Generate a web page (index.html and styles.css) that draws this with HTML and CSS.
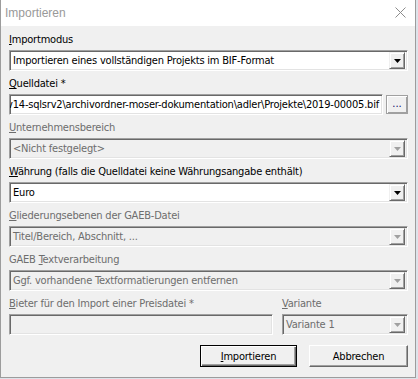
FILE: index.html
```html
<!DOCTYPE html>
<html lang="de">
<head>
    <meta charset="UTF-8">
    <title>Importieren</title>
    <link rel="stylesheet" href="styles.css">
</head>
<body>
    <div class="window">
        <div class="titlebar">
            <span class="title">Importieren</span>
            <svg class="close" width="11" height="11" viewBox="0 0 11 11">
                <path d="M0.5 0.5L10.5 10.5M10.5 0.5L0.5 10.5" stroke="#8c8c8c" stroke-width="1" fill="none"/>
            </svg>
        </div>
        <div class="content">
            <div class="field">
                <label class="label"><u>I</u>mportmodus</label>
                <div class="combo">
                    <span class="value">Importieren eines vollständigen Projekts im BIF-Format</span>
                    <span class="drop"><svg width="7" height="4" viewBox="0 0 7 4"><path d="M0 0H7L3.5 4Z"/></svg></span>
                </div>
            </div>
            <div class="field">
                <label class="label"><u>Q</u>uelldatei *</label>
                <div class="file-row">
                    <div class="edit path"><span>\\srv14-sqlsrv2\archivordner-moser-dokumentation\adler\Projekte\2019-00005.bif</span></div>
                    <button class="browse">...</button>
                </div>
            </div>
            <div class="field disabled">
                <label class="label"><u>U</u>nternehmensbereich</label>
                <div class="combo">
                    <span class="value">&lt;Nicht festgelegt&gt;</span>
                    <span class="drop"><svg width="7" height="4" viewBox="0 0 7 4"><path d="M0 0H7L3.5 4Z"/></svg></span>
                </div>
            </div>
            <div class="field">
                <label class="label"><u>W</u>ährung (falls die Quelldatei keine Währungsangabe enthält)</label>
                <div class="combo">
                    <span class="value">Euro</span>
                    <span class="drop"><svg width="7" height="4" viewBox="0 0 7 4"><path d="M0 0H7L3.5 4Z"/></svg></span>
                </div>
            </div>
            <div class="field disabled">
                <label class="label"><u>G</u>liederungsebenen der GAEB-Datei</label>
                <div class="combo">
                    <span class="value">Titel/Bereich, Abschnitt, ...</span>
                    <span class="drop"><svg width="7" height="4" viewBox="0 0 7 4"><path d="M0 0H7L3.5 4Z"/></svg></span>
                </div>
            </div>
            <div class="field disabled">
                <label class="label">GAEB <u>T</u>extverarbeitung</label>
                <div class="combo">
                    <span class="value">Ggf. vorhandene Textformatierungen entfernen</span>
                    <span class="drop"><svg width="7" height="4" viewBox="0 0 7 4"><path d="M0 0H7L3.5 4Z"/></svg></span>
                </div>
            </div>
            <div class="field-row">
                <div class="field disabled bidder">
                    <label class="label"><u>B</u>ieter für den Import einer Preisdatei *</label>
                    <div class="edit"></div>
                </div>
                <div class="field disabled variant">
                    <label class="label"><u>V</u>ariante</label>
                    <div class="combo">
                        <span class="value">Variante 1</span>
                        <span class="drop"><svg width="7" height="4" viewBox="0 0 7 4"><path d="M0 0H7L3.5 4Z"/></svg></span>
                    </div>
                </div>
            </div>
            <div class="buttons">
                <button class="btn default"><u>I</u>mportieren</button>
                <button class="btn cancel">Abbrechen</button>
            </div>
        </div>
    </div>
</body>
</html>
```

FILE: styles.css
```css
* {
    box-sizing: border-box;
}
body {
    margin: 0;
    background-color: #dde3ea;
    font-family: "DejaVu Sans Condensed", "DejaVu Sans", sans-serif;
    font-stretch: condensed;
    font-size: 11px;
    letter-spacing: -0.2px;
    color: #000;
}
.window {
    width: 416px;
    height: 378px;
    background-color: #f0f0f0;
    border: 1px solid #9c9c9c;
    border-top: 0;
    display: flex;
    flex-direction: column;
}
.titlebar {
    height: 26px;
    background-color: #fff;
    display: flex;
    align-items: center;
    justify-content: space-between;
    padding: 0 9px 1px 4px;
}
.title {
    font-family: "Liberation Sans", sans-serif;
    font-stretch: normal;
    font-size: 12px;
    letter-spacing: 0;
    color: #999;
}
.content {
    padding: 7px 7px 0 8px;
    display: flex;
    flex-direction: column;
}
.field {
    display: flex;
    flex-direction: column;
    margin-bottom: 6px;
}
.label {
    line-height: 13px;
    height: 13px;
    margin-bottom: 4px;
    white-space: nowrap;
}
.disabled .label {
    color: #6d6d6d;
}
.combo, .edit {
    height: 21px;
    border: 1px solid;
    border-color: #a0a0a0 #fff #fff #a0a0a0;
    box-shadow: inset 1px 1px 0 #696969, inset -1px -1px 0 #e3e3e3;
    background-color: #fff;
    display: flex;
    align-items: center;
    padding: 2px;
    overflow: hidden;
}
.value {
    flex: 1;
    padding-left: 1px;
    white-space: nowrap;
    overflow: hidden;
}
.drop {
    width: 16px;
    height: 17px;
    background-color: #f0f0f0;
    border: 1px solid;
    border-color: #f0f0f0 #696969 #696969 #f0f0f0;
    box-shadow: inset 1px 1px 0 #fff, inset -1px -1px 0 #a0a0a0;
    display: flex;
    align-items: center;
    justify-content: center;
}
.drop svg {
    fill: #000;
}
.disabled .combo, .disabled .edit {
    background-color: #f0f0f0;
    color: #6d6d6d;
}
.disabled .drop svg {
    fill: #a0a0a0;
}
.file-row {
    display: flex;
    gap: 3px;
    align-items: center;
}
.path {
    flex: 1;
    justify-content: flex-end;
    white-space: nowrap;
    padding-right: 3px;
}
.browse {
    width: 22px;
    height: 19px;
    padding: 0 0 3px;
    border: 1px solid #a0a0a0;
    box-shadow: inset 1px 1px 0 #fff, inset -1px -1px 0 #a0a0a0;
    background-color: #f0f0f0;
    font-family: inherit;
    font-size: 11px;
    line-height: 11px;
    color: #0a0a6a;
}
.field-row {
    display: flex;
    gap: 9px;
}
.bidder {
    flex: 1;
}
.variant {
    width: 126px;
}
.buttons {
    display: flex;
    justify-content: flex-end;
    gap: 12px;
    margin-top: 4px;
}
.btn {
    height: 22px;
    background-color: #f0f0f0;
    border: 1px solid;
    border-color: #fff #696969 #696969 #fff;
    box-shadow: inset -1px -1px 0 #a0a0a0;
    font-family: inherit;
    font-stretch: condensed;
    font-size: 11px;
    letter-spacing: -0.2px;
    color: #000;
    padding: 0;
}
.btn.default {
    width: 97px;
    border: 1px solid #000;
    box-shadow: inset 1px 1px 0 #fff, inset -1px -1px 0 #696969, inset -2px -2px 0 #a0a0a0;
}
.btn.cancel {
    width: 99px;
}
```
